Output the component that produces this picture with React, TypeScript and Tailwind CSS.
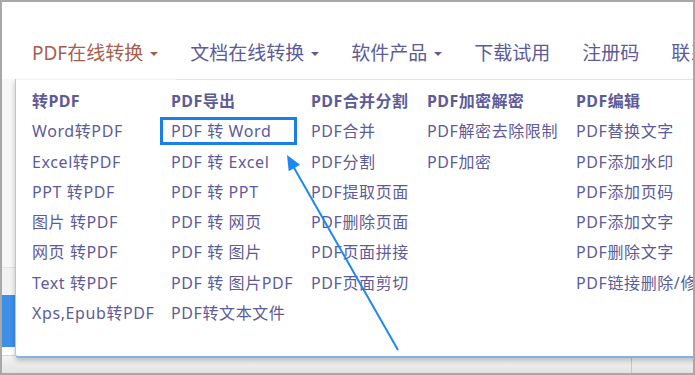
import React from "react";

const columns = [
  {
    width: "w-[139px]",
    title: "转PDF",
    items: ["Word转PDF", "Excel转PDF", "PPT 转PDF", "图片 转PDF", "网页 转PDF", "Text 转PDF", "Xps,Epub转PDF"],
  },
  {
    width: "w-[140px]",
    title: "PDF导出",
    items: ["PDF 转 Word", "PDF 转 Excel", "PDF 转 PPT", "PDF 转 网页", "PDF 转 图片", "PDF 转 图片PDF", "PDF转文本文件"],
  },
  {
    width: "w-[116px]",
    title: "PDF合并分割",
    items: ["PDF合并", "PDF分割", "PDF提取页面", "PDF删除页面", "PDF页面拼接", "PDF页面剪切"],
  },
  {
    width: "w-[149px]",
    title: "PDF加密解密",
    items: ["PDF解密去除限制", "PDF加密"],
  },
  {
    width: "w-[160px]",
    title: "PDF编辑",
    items: ["PDF替换文字", "PDF添加水印", "PDF添加页码", "PDF添加文字", "PDF删除文字", "PDF链接删除/修改"],
  },
];

const navItems = [
  { label: "PDF在线转换", caret: true, active: true },
  { label: "文档在线转换", caret: true },
  { label: "软件产品", caret: true },
  { label: "下载试用" },
  { label: "注册码" },
  { label: "联系我们" },
];

const Caret = () => (
  <span className="ml-[7px] mt-[2px] w-0 h-0 border-x-[4px] border-x-transparent border-t-[4px] border-t-current" />
);

export default function App() {
  return (
    <div className="relative w-[695px] h-[375px] overflow-hidden bg-white border-2 border-[#a8a8a8] font-['Noto_Sans','Noto_Sans_CJK_SC',sans-serif] text-[#5d5b98]">
      {/* top nav */}
      <nav className="h-[77px] flex items-start pt-[38px] pl-[14px] whitespace-nowrap text-[19px] leading-[26px]">
        {navItems.map((n) => (
          <div
            key={n.label}
            className={`px-4 flex items-center ${n.active ? "text-[#a6604f]" : ""}`}
          >
            {n.label}
            {n.caret && <Caret />}
          </div>
        ))}
      </nav>

      {/* page behind the menu */}
      <div className="flex h-[294px]">
        <div className="w-[13px] flex flex-col">
          <div className="h-[188px] bg-[#f7f7f7]" />
          <div className="h-px bg-[#e2e2e2]" />
          <div className="h-[27px] bg-[#f2f2f2]" />
          <div className="h-[52px] bg-[#3d8fe7]" />
          <div className="h-[8px] bg-white" />
          <div className="h-px bg-[#d6d6d6]" />
          <div className="flex-1 bg-gradient-to-b from-[#f4f4f4] to-[#e3e3e3]" />
        </div>
        <div className="flex-1 flex flex-col">
          <div className="flex-1" />
          <div className="h-[15px] flex bg-gradient-to-b from-[#f4f4f4] to-[#e2e2e2]">
            <div className="w-[617px] border-r border-r-[#c8c8c8]" />
          </div>
        </div>
      </div>

      {/* dropdown menu */}
      <div className="absolute left-[13px] top-[77px] w-[700px] h-[279px] bg-white border-l border-l-[#a9c9f0] border-b-2 border-b-[#80b3ee] rounded-bl-[4px] shadow-[0_3px_5px_rgba(0,0,0,0.22)]">
        <div className="flex h-px">
          <div className="w-[160px] bg-[#f1f5fa]" />
          <div className="flex-1 bg-[#d9e5f4]" />
        </div>
        <div className="flex pl-[16px] pt-[6px] text-[16px] leading-[30.3px] tracking-[0.6px] whitespace-nowrap">
          {columns.map((c) => (
            <div key={c.title} className={`${c.width} shrink-0 flex flex-col`}>
              <div className="font-bold tracking-[0.4px]">{c.title}</div>
              {c.items.map((it) => (
                <div key={it} className="relative">
                  {it === "PDF 转 Word" && (
                    <span className="absolute left-[-11px] top-[1px] w-[137px] h-[28px] border-[3px] border-[#1b7fe9]" />
                  )}
                  <span className="relative">{it}</span>
                </div>
              ))}
            </div>
          ))}
        </div>
      </div>

      {/* annotation arrow */}
      <svg
        className="absolute left-[-2px] top-[-2px] w-[695px] h-[375px] pointer-events-none"
        viewBox="0 0 695 375"
      >
        <line x1="398" y1="350" x2="293" y2="166" stroke="#1e88f0" strokeWidth="2" />
        <polygon points="287,155 288.7,171.2 300.1,164.8" fill="#1e88f0" />
      </svg>
    </div>
  );
}
